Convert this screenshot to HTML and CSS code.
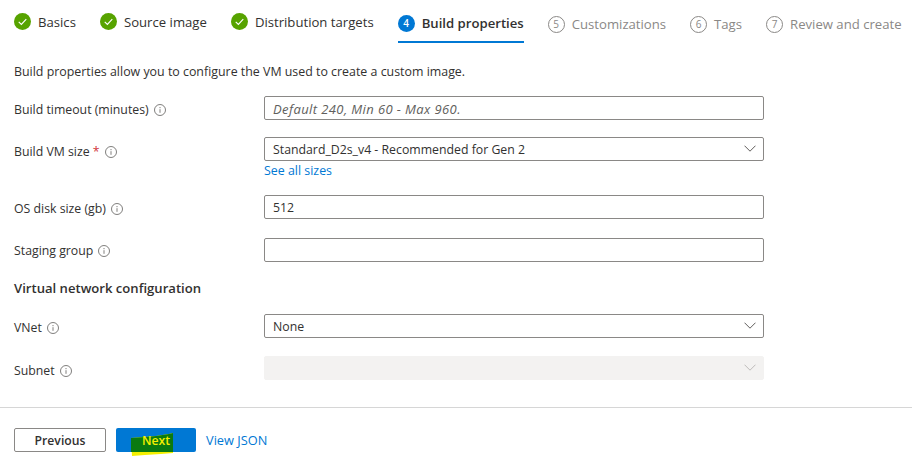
FILE: index.html
```html
<!DOCTYPE html>
<html lang="en">
<head>
<meta charset="utf-8">
<title>Build properties</title>
<link rel="stylesheet" href="styles.css">
</head>
<body>
<nav class="tabs">
  <div class="tab done"><svg class="step" viewBox="0 0 18 18"><circle cx="9" cy="9" r="9" fill="#57a300"/><path d="M5 9.300l2.800 2.800L13 6.400" fill="none" stroke="#fff" stroke-width="1.200"/></svg><span>Basics</span></div>
  <div class="tab done"><svg class="step" viewBox="0 0 18 18"><circle cx="9" cy="9" r="9" fill="#57a300"/><path d="M5 9.300l2.800 2.800L13 6.400" fill="none" stroke="#fff" stroke-width="1.200"/></svg><span>Source image</span></div>
  <div class="tab done"><svg class="step" viewBox="0 0 18 18"><circle cx="9" cy="9" r="9" fill="#57a300"/><path d="M5 9.300l2.800 2.800L13 6.400" fill="none" stroke="#fff" stroke-width="1.200"/></svg><span>Distribution targets</span></div>
  <div class="tab active"><span class="num">4</span><span>Build properties</span></div>
  <div class="tab todo"><span class="num">5</span><span>Customizations</span></div>
  <div class="tab todo"><span class="num">6</span><span>Tags</span></div>
  <div class="tab todo"><span class="num">7</span><span>Review and create</span></div>
</nav>
<main class="content">
  <p class="intro">Build properties allow you to configure the VM used to create a custom image.</p>
  <div class="row r1">
    <div class="label">Build timeout (minutes)<svg class="info" viewBox="0 0 12 12"><circle cx="6" cy="6" r="5.500"/><path d="M6 5.200v3.600M6 3v1.200"/></svg></div>
    <div class="field input placeholder">Default 240, Min 60 - Max 960.</div>
  </div>
  <div class="row r2">
    <div class="label">Build VM size <span class="req">*</span><svg class="info" viewBox="0 0 12 12"><circle cx="6" cy="6" r="5.500"/><path d="M6 5.200v3.600M6 3v1.200"/></svg></div>
    <div class="stack">
      <div class="field select">Standard_D2s_v4 - Recommended for Gen 2<svg class="chev" viewBox="0 0 12 7"><path d="M.5.700L6 6.200 11.500.700"/></svg></div>
      <a class="link sizes" href="#">See all sizes</a>
    </div>
  </div>
  <div class="row r3">
    <div class="label">OS disk size (gb)<svg class="info" viewBox="0 0 12 12"><circle cx="6" cy="6" r="5.500"/><path d="M6 5.200v3.600M6 3v1.200"/></svg></div>
    <div class="field input">512</div>
  </div>
  <div class="row r4">
    <div class="label">Staging group<svg class="info" viewBox="0 0 12 12"><circle cx="6" cy="6" r="5.500"/><path d="M6 5.200v3.600M6 3v1.200"/></svg></div>
    <div class="field input"></div>
  </div>
  <h2 class="heading">Virtual network configuration</h2>
  <div class="row r5">
    <div class="label">VNet<svg class="info" viewBox="0 0 12 12"><circle cx="6" cy="6" r="5.500"/><path d="M6 5.200v3.600M6 3v1.200"/></svg></div>
    <div class="field select">None<svg class="chev" viewBox="0 0 12 7"><path d="M.5.700L6 6.200 11.500.700"/></svg></div>
  </div>
  <div class="row r6">
    <div class="label">Subnet<svg class="info" viewBox="0 0 12 12"><circle cx="6" cy="6" r="5.500"/><path d="M6 5.200v3.600M6 3v1.200"/></svg></div>
    <div class="field select disabled"><svg class="chev" viewBox="0 0 12 7"><path d="M.5.700L6 6.200 11.500.700"/></svg></div>
  </div>
</main>
<footer class="footer">
  <button class="btn prev">Previous</button>
  <button class="btn next"><svg class="marker" viewBox="0 0 44 24"><path d="M0 5L14 4L25 3L38 1L42 0L42 20L30 21L14 22L1 23Z" fill="#f4ef00"/><path d="M0 5L14 4L25 3L38 1L42 0L42 19L30 19L14 19L0 19Z" fill="#0b7a10"/></svg><span class="next-text">Next</span></button>
  <a class="link json" href="#">View JSON</a>
</footer>
</body>
</html>
```
FILE: styles.css
```css
* { box-sizing: border-box; }
html, body { margin: 0; padding: 0; background: #fff; }
body { font-family: "Open Sans", "Noto Sans", sans-serif; font-size: 12.4px; color: #323130; width: 912px; height: 469px; overflow: hidden; }
.tabs { display: flex; gap: 24px; padding-left: 14px; height: 43px; font-size: 13.15px; }
.tab { display: flex; align-items: center; gap: 7px; height: 43px; padding-top: 5px; white-space: nowrap; }
.tab.done { padding-bottom: 3px; padding-top: 3px; }
.step { width: 17px; height: 17px; }
.tab.active { font-weight: 600; border-bottom: 2px solid #0078d4; padding-top: 6px; padding-bottom: 1px; }
.tab.todo { color: #8a8886; }
.num { width: 17px; height: 17px; border-radius: 50%; display: flex; align-items: center; justify-content: center; font-size: 10px; line-height: 1; flex: none; font-weight: 400; }
.active .num { background: #0078d4; color: #fff; font-weight: 600; }
.todo .num { border: 1px solid #8a8886; color: #8a8886; }
.content { padding-left: 14px; width: 764px; }
.intro { margin: 20px 0 0; line-height: 18px; }
.row { display: flex; align-items: flex-start; }
.r1 { margin-top: 15px; }
.r2 { margin-top: 17px; }
.r3 { margin-top: 15px; }
.r4 { margin-top: 19px; }
.r5 { margin-top: 17px; }
.r6 { margin-top: 18px; }
.label { width: 250px; flex: none; display: flex; align-items: center; line-height: 18px; padding-top: 5px; white-space: pre; font-size: 12.3px; }
.r2 .label, .r6 .label { padding-top: 6px; }
.r4 .label { padding-top: 4px; }
.req { color: #d13438; }
.info { width: 12px; height: 12px; margin-left: 5px; fill: none; stroke: #605e5c; stroke-width: 0.8; }
.stack { flex: 1; display: flex; flex-direction: column; }
.field { width: 500px; height: 24px; border: 1px solid #8a8886; border-radius: 2px; padding: 1px 8px 0; line-height: 22px; position: relative; font-size: 12.3px; }
.placeholder { font-style: italic; color: #605e5c; font-size: 13px; letter-spacing: 0.4px; }
.chev { position: absolute; right: 7px; top: 7px; width: 12px; height: 7px; fill: none; stroke: #605e5c; stroke-width: 1; }
.disabled { background: #f3f2f1; border-color: #f3f2f1; }
.disabled .chev { stroke: #bdbbb9; }
.link { color: #0078d4; text-decoration: none; }
.sizes { line-height: 19px; }
.heading { margin: 17px 0 0; font-size: 13.1px; font-weight: 600; line-height: 18px; height: 18px; }
.footer { margin-top: 27px; border-top: 1px solid #d6d6d6; padding: 20px 0 0 14px; display: flex; align-items: center; gap: 10px; }
.btn { height: 24px; border-radius: 2px; font: 600 12.2px "Open Sans", "Noto Sans", sans-serif; padding: 0; position: relative; }
.prev { width: 92px; background: #fff; border: 1px solid #8a8886; color: #323130; }
.next { width: 80px; background: #0078d4; border: 0; color: #f4ef00; overflow: visible; }
.marker { position: absolute; left: 15px; top: 5px; width: 44px; height: 24px; }
.next-text { position: relative; }
.json { line-height: 24px; font-size: 12.8px; }
```
